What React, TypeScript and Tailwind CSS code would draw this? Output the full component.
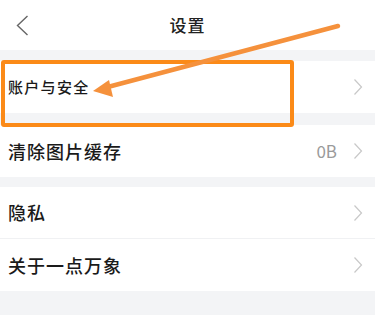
import React from "react";

function Chevron({ className = "" }: { className?: string }) {
  return (
    <svg width="10" height="18" viewBox="0 0 10 18" className={className}>
      <polyline points="1.5,1.5 8.5,9 1.5,16.5" fill="none" stroke="#c8c8c8" strokeWidth="1.2" />
    </svg>
  );
}

function Row({
  label,
  value,
  small,
  divider,
}: {
  label: string;
  value?: string;
  small?: boolean;
  divider?: boolean;
}) {
  return (
    <div
      className={[
        "h-[52px] bg-white flex items-center justify-between pl-2 pr-[12px]",
        divider ? "border-b border-[#f0f1f3]" : "",
      ].join(" ")}
    >
      <span
        className={
          small
            ? "text-[15px] font-medium text-[#1a1a1a] tracking-[1.3px]"
            : "text-[18px] font-medium text-[#1a1a1a] tracking-[1px]"
        }
      >
        {label}
      </span>
      <div className="flex items-center gap-[16px]">
        {value && <span className="text-[17px] text-[#9a9a9a]">{value}</span>}
        <Chevron />
      </div>
    </div>
  );
}

export default function App() {
  return (
    <div
      className="relative w-[375px] h-[315px] overflow-hidden bg-[#f3f4f6]"
      style={{ fontFamily: '"Noto Sans CJK SC", "Liberation Sans", sans-serif' }}
    >
      <header className="h-[50px] bg-white flex items-center">
        <div className="w-[50px] pl-[16px] flex items-center">
          <svg width="13" height="21" viewBox="0 0 13 21">
            <polyline points="11.5,1 1.5,10.5 11.5,20" fill="none" stroke="#666" strokeWidth="1.4" />
          </svg>
        </div>
        <h1 className="flex-1 text-center text-[17px] font-medium text-[#222] tracking-[1px]">设置</h1>
        <div className="w-[50px]" />
      </header>

      <div className="h-[11px]" />
      <Row label="账户与安全" small />
      <div className="h-[12px]" />
      <Row label="清除图片缓存" value="0B" />
      <div className="h-[10px]" />
      <Row label="隐私" divider />
      <Row label="关于一点万象" />

      {/* annotation overlay */}
      <div className="absolute left-[1px] top-[60px] w-[293px] h-[67px] border-[4.5px] border-[#fb8a18] rounded-[3px]" />
      <svg className="absolute inset-0 pointer-events-none" width="375" height="315" viewBox="0 0 375 315">
        <line x1="338" y1="26" x2="104" y2="88" stroke="#f5913c" strokeWidth="4.5" strokeLinecap="round" />
        <polygon points="93,91 109,80 113,97" fill="#f5913c" />
      </svg>
    </div>
  );
}
